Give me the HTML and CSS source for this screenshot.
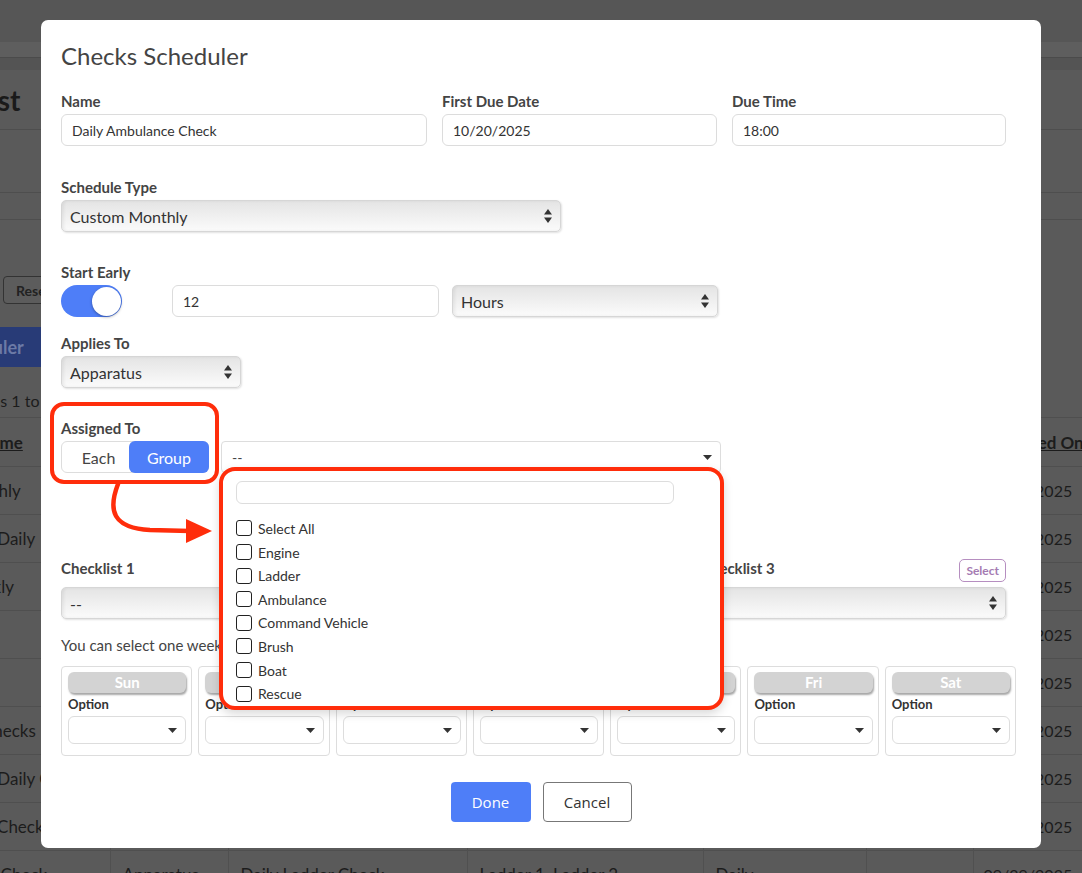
FILE: index.html
```html
<!DOCTYPE html>
<html lang="en">
<head>
  <meta charset="UTF-8">
  <meta name="viewport" content="width=device-width, initial-scale=1.0">
  <title>Checks Scheduler</title>
  <link rel="stylesheet" href="styles.css">
</head>
<body>
  <!-- page behind the modal (dimmed) -->
  <div class="page">
    <div class="topbar"></div>
    <div class="subnav"></div>
    <div class="subnav-shadow"></div>
    <div class="page-header">
      <h1 class="page-title">Checklist</h1>
    </div>
    <div class="filter-row tall"></div>
    <div class="filter-row short"></div>
    <div class="toolbar">
      <button class="btn-reset">Reset</button>
    </div>
    <button class="btn-scheduler">Checks Scheduler</button>
    <p class="showing">Showing entries 1 to 10 of 10</p>
    <table class="checks-table">
      <thead>
        <tr>
          <th class="col-name">Name</th>
          <th class="col-type">Type</th>
          <th class="col-list">Checklist</th>
          <th class="col-units">Units</th>
          <th class="col-sched">Schedule</th>
          <th class="col-time">Time</th>
          <th class="col-date">Created On</th>
        </tr>
      </thead>
      <tbody>
        <tr><td>Monthly</td><td>Apparatus</td><td>Monthly Check</td><td>Engine 1</td><td>Monthly</td><td></td><td>10/20/2025</td></tr>
        <tr><td>EMS Daily</td><td>Apparatus</td><td>Daily Check</td><td>Medic 1</td><td>Daily</td><td></td><td>10/14/2025</td></tr>
        <tr><td>Weekly</td><td>Apparatus</td><td>Weekly Check</td><td>Engine 2</td><td>Weekly</td><td></td><td>10/10/2025</td></tr>
        <tr><td>Test</td><td>Apparatus</td><td>Test Check</td><td>Engine 1</td><td>Daily</td><td></td><td>10/08/2025</td></tr>
        <tr><td>Air</td><td>Apparatus</td><td>Air Pack Check</td><td>Engine 3</td><td>Weekly</td><td></td><td>10/06/2025</td></tr>
        <tr><td>All Checks</td><td>Apparatus</td><td>All Checks</td><td>All</td><td>Daily</td><td></td><td>10/03/2025</td></tr>
        <tr><td>Boat Daily Check</td><td>Apparatus</td><td>Boat Check</td><td>Boat 1</td><td>Daily</td><td></td><td>10/01/2025</td></tr>
        <tr><td>Tank Check</td><td>Apparatus</td><td>Tank Check</td><td>Tanker 1</td><td>Daily</td><td></td><td>09/30/2025</td></tr>
        <tr><td>Rope Check</td><td>Apparatus</td><td>Daily Ladder Check</td><td>Ladder 1, Ladder 2</td><td>Daily</td><td></td><td>09/29/2025</td></tr>
      </tbody>
    </table>
  </div>

  <div class="modal">
    <h2 class="modal-title">Checks Scheduler</h2>

    <div class="row-top">
      <div>
        <label class="field-label">Name</label>
        <input class="text-input" type="text" value="Daily Ambulance Check">
      </div>
      <div>
        <label class="field-label">First Due Date</label>
        <input class="text-input" type="text" value="10/20/2025">
      </div>
      <div>
        <label class="field-label">Due Time</label>
        <input class="text-input" type="text" value="18:00">
      </div>
    </div>

    <div class="field schedule-field">
      <label class="field-label">Schedule Type</label>
      <div class="select-box schedule-select">
        <span>Custom Monthly</span>
        <svg class="updown" width="8" height="14" viewBox="0 0 8 14"><polygon points="4,0 8,5.5 0,5.5"/><polygon points="0,8.5 8,8.5 4,14"/></svg>
      </div>
    </div>

    <div class="field early-field">
      <label class="field-label">Start Early</label>
      <div class="early-row">
        <div class="toggle"><span class="knob"></span></div>
        <input class="text-input early-input" type="text" value="12">
        <div class="select-box early-unit">
          <span>Hours</span>
          <svg class="updown" width="8" height="14" viewBox="0 0 8 14"><polygon points="4,0 8,5.5 0,5.5"/><polygon points="0,8.5 8,8.5 4,14"/></svg>
        </div>
      </div>
    </div>

    <div class="field applies-field">
      <label class="field-label">Applies To</label>
      <div class="select-box applies-select">
        <span>Apparatus</span>
        <svg class="updown" width="8" height="14" viewBox="0 0 8 14"><polygon points="4,0 8,5.5 0,5.5"/><polygon points="0,8.5 8,8.5 4,14"/></svg>
      </div>
    </div>

    <div class="assigned-row">
      <div class="assigned-field">
        <label class="field-label">Assigned To</label>
        <div class="segmented">
          <span class="seg-item">Each</span>
          <span class="seg-item active">Group</span>
        </div>
        <svg class="callout-arrow" width="120" height="70" viewBox="0 0 120 70">
          <path d="M18 4 C 8 30, 12 48, 50 50 L 90 51" fill="none" stroke="#ff2d0b" stroke-width="4.5" stroke-linecap="round"/>
          <polygon points="86,39 112,51 86,63" fill="#ff2d0b"/>
        </svg>
      </div>

      <div class="multi-select">
        <div class="multi-trigger">
          <span>--</span>
          <svg width="9" height="5" viewBox="0 0 9 5"><polygon points="0,0 9,0 4.5,5"/></svg>
        </div>
        <div class="multi-panel">
          <input class="multi-search" type="text">
          <ul class="multi-options">
            <li><span class="checkbox"></span>Select All</li>
            <li><span class="checkbox"></span>Engine</li>
            <li><span class="checkbox"></span>Ladder</li>
            <li><span class="checkbox"></span>Ambulance</li>
            <li><span class="checkbox"></span>Command Vehicle</li>
            <li><span class="checkbox"></span>Brush</li>
            <li><span class="checkbox"></span>Boat</li>
            <li><span class="checkbox"></span>Rescue</li>
          </ul>
        </div>
      </div>
    </div>

    <div class="checklist-row">
      <div>
        <div class="checklist-head">
          <label class="field-label">Checklist 1</label>
          <button class="btn-select">Select</button>
        </div>
        <div class="select-box">
          <span>--</span>
          <svg class="updown" width="8" height="14" viewBox="0 0 8 14"><polygon points="4,0 8,5.5 0,5.5"/><polygon points="0,8.5 8,8.5 4,14"/></svg>
        </div>
      </div>
      <div>
        <div class="checklist-head">
          <label class="field-label">Checklist 2</label>
          <button class="btn-select">Select</button>
        </div>
        <div class="select-box">
          <span>--</span>
          <svg class="updown" width="8" height="14" viewBox="0 0 8 14"><polygon points="4,0 8,5.5 0,5.5"/><polygon points="0,8.5 8,8.5 4,14"/></svg>
        </div>
      </div>
      <div>
        <div class="checklist-head">
          <label class="field-label">Checklist 3</label>
          <button class="btn-select">Select</button>
        </div>
        <div class="select-box">
          <span>--</span>
          <svg class="updown" width="8" height="14" viewBox="0 0 8 14"><polygon points="4,0 8,5.5 0,5.5"/><polygon points="0,8.5 8,8.5 4,14"/></svg>
        </div>
      </div>
    </div>

    <p class="week-hint">You can select one weekday option for each day.</p>

    <div class="day-grid">
      <div class="day-card"><div class="day-pill">Sun</div><label class="option-label">Option</label><div class="option-select"><svg width="9" height="5" viewBox="0 0 9 5"><polygon points="0,0 9,0 4.5,5"/></svg></div></div>
      <div class="day-card"><div class="day-pill">Mon</div><label class="option-label">Option</label><div class="option-select"><svg width="9" height="5" viewBox="0 0 9 5"><polygon points="0,0 9,0 4.5,5"/></svg></div></div>
      <div class="day-card"><div class="day-pill">Tue</div><label class="option-label">Option</label><div class="option-select"><svg width="9" height="5" viewBox="0 0 9 5"><polygon points="0,0 9,0 4.5,5"/></svg></div></div>
      <div class="day-card"><div class="day-pill">Wed</div><label class="option-label">Option</label><div class="option-select"><svg width="9" height="5" viewBox="0 0 9 5"><polygon points="0,0 9,0 4.5,5"/></svg></div></div>
      <div class="day-card"><div class="day-pill">Thu</div><label class="option-label">Option</label><div class="option-select"><svg width="9" height="5" viewBox="0 0 9 5"><polygon points="0,0 9,0 4.5,5"/></svg></div></div>
      <div class="day-card"><div class="day-pill">Fri</div><label class="option-label">Option</label><div class="option-select"><svg width="9" height="5" viewBox="0 0 9 5"><polygon points="0,0 9,0 4.5,5"/></svg></div></div>
      <div class="day-card"><div class="day-pill">Sat</div><label class="option-label">Option</label><div class="option-select"><svg width="9" height="5" viewBox="0 0 9 5"><polygon points="0,0 9,0 4.5,5"/></svg></div></div>
    </div>

    <div class="modal-actions">
      <button class="btn-done">Done</button>
      <button class="btn-cancel">Cancel</button>
    </div>
  </div>
</body>
</html>
```

FILE: styles.css
```css
* {
  box-sizing: border-box;
}
html, body {
  margin: 0;
  height: 100%;
  overflow: hidden;
}
body {
  font-family: Lato, "Open Sans", sans-serif;
  background-color: #5a5a5a;
  color: #1c1c1c;
}

/* Dimmed page behind */
.page {
  width: calc(100% + 60px);
  height: 100%;
  margin-left: -60px;
  overflow: hidden;
}
.topbar {
  height: 42px;
  background: #565656;
}
.subnav {
  height: 16px;
  background: #5e5e5e;
  border-bottom: 1px solid #4b4b4b;
}
.subnav-shadow {
  height: 12px;
  background: #545454;
}
.page-header {
  height: 59px;
  display: flex;
  align-items: center;
}
.page-title {
  margin: 0 0 0 -34px;
  font-size: 28px;
  font-weight: 700;
  color: #1a1a1a;
}
.filter-row {
  border-top: 1px solid #4e4e4e;
}
.filter-row.tall {
  height: 63px;
}
.filter-row.short {
  height: 27px;
}
.toolbar {
  border-top: 1px solid #4e4e4e;
  padding-top: 56px;
  height: 108px;
}
.btn-reset {
  margin-left: 63px;
  height: 28px;
  padding: 0 12px;
  font-family: Lato, sans-serif;
  font-size: 14px;
  font-weight: 700;
  color: #222;
  background: #5c5c5c;
  border: 1px solid #333;
  border-radius: 4px;
}
.btn-scheduler {
  display: block;
  margin-left: -72px;
  height: 40px;
  padding: 0 24px 0 14px;
  font-family: Lato, sans-serif;
  font-size: 18px;
  font-weight: 700;
  color: #6c7aa6;
  background: #283b77;
  border: none;
  border-radius: 3px;
}
.showing {
  margin: 0 0 0 -45px;
  height: 50px;
  padding-top: 24px;
  font-size: 16px;
  color: #1c1c1c;
}
.checks-table {
  table-layout: fixed;
  width: 1161px;
  margin-left: 12px;
  border-collapse: collapse;
  font-size: 17px;
  color: #1c1c1c;
}
.checks-table th,
.checks-table td {
  height: 48px;
  padding: 0 12px;
  text-align: left;
  white-space: nowrap;
  overflow: hidden;
  border-top: 1px solid #4f4f4f;
  border-left: 1px solid #505050;
}
.checks-table th {
  height: 49px;
  font-weight: 700;
  text-decoration: underline;
}
.checks-table th:first-child,
.checks-table td:first-child {
  border-left: none;
  padding-left: 6px;
}
.checks-table th.col-name {
  padding-left: 26px;
}
.checks-table td:last-child {
  padding-left: 10px;
  font-size: 16px;
}
.checks-table th.col-date {
  padding-left: 23px;
}
.col-name { width: 158px; }
.col-type { width: 118px; }
.col-list { width: 239px; }
.col-units { width: 236px; }
.col-sched { width: 163px; }
.col-time { width: 107px; }
.col-date { width: 140px; }

/* Modal */
.modal {
  position: fixed;
  top: 20px;
  left: 41px;
  width: 1000px;
  height: 828px;
  padding: 20px;
  background: #fff;
  border-radius: 7px;
  color: #444;
}
.modal-title {
  margin: 0;
  font-size: 24px;
  font-weight: 400;
  line-height: 32px;
  color: #444;
}
.field-label {
  display: block;
  margin-bottom: 4px;
  font-size: 15px;
  font-weight: 700;
  line-height: 18px;
  color: #444;
}
.text-input {
  display: block;
  width: 100%;
  height: 32px;
  padding: 0 10px;
  font-family: Lato, sans-serif;
  font-size: 14px;
  color: #333;
  border: 1px solid #dcdcdc;
  border-radius: 6px;
  outline: none;
}
.row-top {
  display: grid;
  grid-template-columns: 366px 275px 274px;
  gap: 15px;
  margin-top: 20px;
}
.select-box {
  display: flex;
  align-items: center;
  justify-content: space-between;
  height: 32px;
  padding: 0 8px;
  font-size: 16px;
  color: #333;
  background: linear-gradient(#e4e4e4, #fbfbfb);
  border: 1px solid #d6d6d6;
  border-radius: 5px;
  box-shadow: inset 2px 0 3px rgba(0, 0, 0, 0.06), 1px 1px 2px rgba(0, 0, 0, 0.12);
}
.updown {
  fill: #333;
  flex: none;
}
.schedule-field {
  margin-top: 32px;
}
.schedule-select {
  width: 500px;
}
.early-field {
  margin-top: 31px;
}
.early-row {
  display: flex;
  align-items: center;
}
.toggle {
  position: relative;
  width: 61px;
  height: 32px;
  margin-right: 50px;
  background: #4e7ef8;
  border-radius: 16px;
}
.knob {
  position: absolute;
  top: 1.5px;
  right: 1px;
  width: 29px;
  height: 29px;
  background: #fff;
  border-radius: 50%;
  box-shadow: 0 1px 3px rgba(0, 0, 0, 0.35);
}
.early-input {
  width: 267px;
}
.early-unit {
  width: 266px;
  margin-left: 13px;
}
.applies-field {
  margin-top: 17px;
}
.applies-select {
  width: 180px;
}

/* Assigned to */
.assigned-row {
  display: flex;
  align-items: flex-end;
  gap: 12px;
  margin-top: 31px;
}
.assigned-field {
  position: relative;
  width: 148px;
}
.assigned-field::before {
  content: "";
  position: absolute;
  top: -17px;
  left: -11px;
  right: -10px;
  bottom: -11px;
  border: 4px solid #ff2d0b;
  border-radius: 14px;
}
.callout-arrow {
  position: absolute;
  left: 39px;
  top: 61px;
}
.segmented {
  display: flex;
  height: 32px;
  border: 1px solid #ddd;
  border-radius: 6px;
}
.seg-item {
  display: flex;
  align-items: center;
  justify-content: center;
  width: 67px;
  padding-left: 6px;
  font-size: 16px;
  color: #444;
}
.seg-item.active {
  flex: 1;
  margin: -1px -1px -1px 0;
  padding-left: 0;
  color: #fff;
  background: #4e7ef8;
  border-radius: 6px;
}
.multi-select {
  position: relative;
  width: 500px;
}
.multi-trigger {
  display: flex;
  align-items: center;
  justify-content: space-between;
  height: 32px;
  padding: 0 8px 0 10px;
  font-size: 14px;
  color: #444;
  border: 1px solid #ddd;
  border-radius: 4px;
}
.multi-trigger svg,
.option-select svg {
  fill: #333;
}
.multi-panel {
  position: absolute;
  z-index: 10;
  top: 26px;
  left: -2px;
  width: 505px;
  padding: 10px 13px 1px;
  background: #fff;
  border: 4px solid #ff2d0b;
  border-radius: 16px;
  box-shadow: 0 4px 10px rgba(0, 0, 0, 0.15);
}
.multi-search {
  display: block;
  width: 438px;
  height: 23px;
  border: 1px solid #ddd;
  border-radius: 6px;
  outline: none;
}
.multi-options {
  list-style: none;
  margin: 12.7px 0 0;
  padding: 0;
}
.multi-options li {
  display: flex;
  align-items: center;
  height: 23.6px;
  font-size: 14px;
  color: #333;
}
.checkbox {
  width: 16px;
  height: 16px;
  margin-right: 6px;
  border: 1.5px solid #222;
  border-radius: 3px;
}

/* Checklists */
.checklist-row {
  display: grid;
  grid-template-columns: repeat(3, 305px);
  gap: 15px;
  margin-top: 86px;
}
.checklist-head {
  display: flex;
  align-items: flex-start;
  justify-content: space-between;
  height: 23px;
  margin-bottom: 5px;
}
.checklist-head .field-label {
  margin: 0;
}
.btn-select {
  height: 23px;
  padding: 0 6px;
  font-family: Lato, sans-serif;
  font-size: 12px;
  font-weight: 700;
  color: #a57bb2;
  background: #fff;
  border: 1px solid #b68ec0;
  border-radius: 5px;
}
.week-hint {
  margin: 16px 0 0;
  font-size: 15px;
  line-height: 20px;
  color: #444;
}
.day-grid {
  display: grid;
  grid-template-columns: repeat(7, 1fr);
  gap: 6px;
  width: 955px;
  margin-top: 11px;
}
.day-card {
  padding: 5px 5px 11px 6px;
  border: 1px solid #ddd;
  border-radius: 4px;
}
.day-pill {
  height: 21px;
  font-size: 15px;
  font-weight: 700;
  line-height: 21px;
  text-align: center;
  color: #fff;
  background: #d3d3d3;
  border-radius: 6px;
  box-shadow: 1px 2px 2px rgba(0, 0, 0, 0.35);
}
.option-label {
  display: block;
  margin-top: 3px;
  font-size: 13px;
  font-weight: 700;
  line-height: 16px;
  color: #333;
}
.option-select {
  display: flex;
  align-items: center;
  justify-content: flex-end;
  height: 28px;
  margin-top: 4px;
  padding-right: 8px;
  border: 1px solid #ddd;
  border-radius: 6px;
}
.modal-actions {
  display: flex;
  justify-content: center;
  gap: 12px;
  margin-top: 26px;
}
.btn-done,
.btn-cancel {
  height: 40px;
  font-family: "Open Sans", sans-serif;
  font-size: 15px;
  border-radius: 4px;
  cursor: pointer;
}
.btn-done {
  width: 80px;
  color: #fff;
  background: #4e7ef8;
  border: none;
}
.btn-cancel {
  width: 89px;
  color: #333;
  background: #fff;
  border: 1px solid #777;
}
```
